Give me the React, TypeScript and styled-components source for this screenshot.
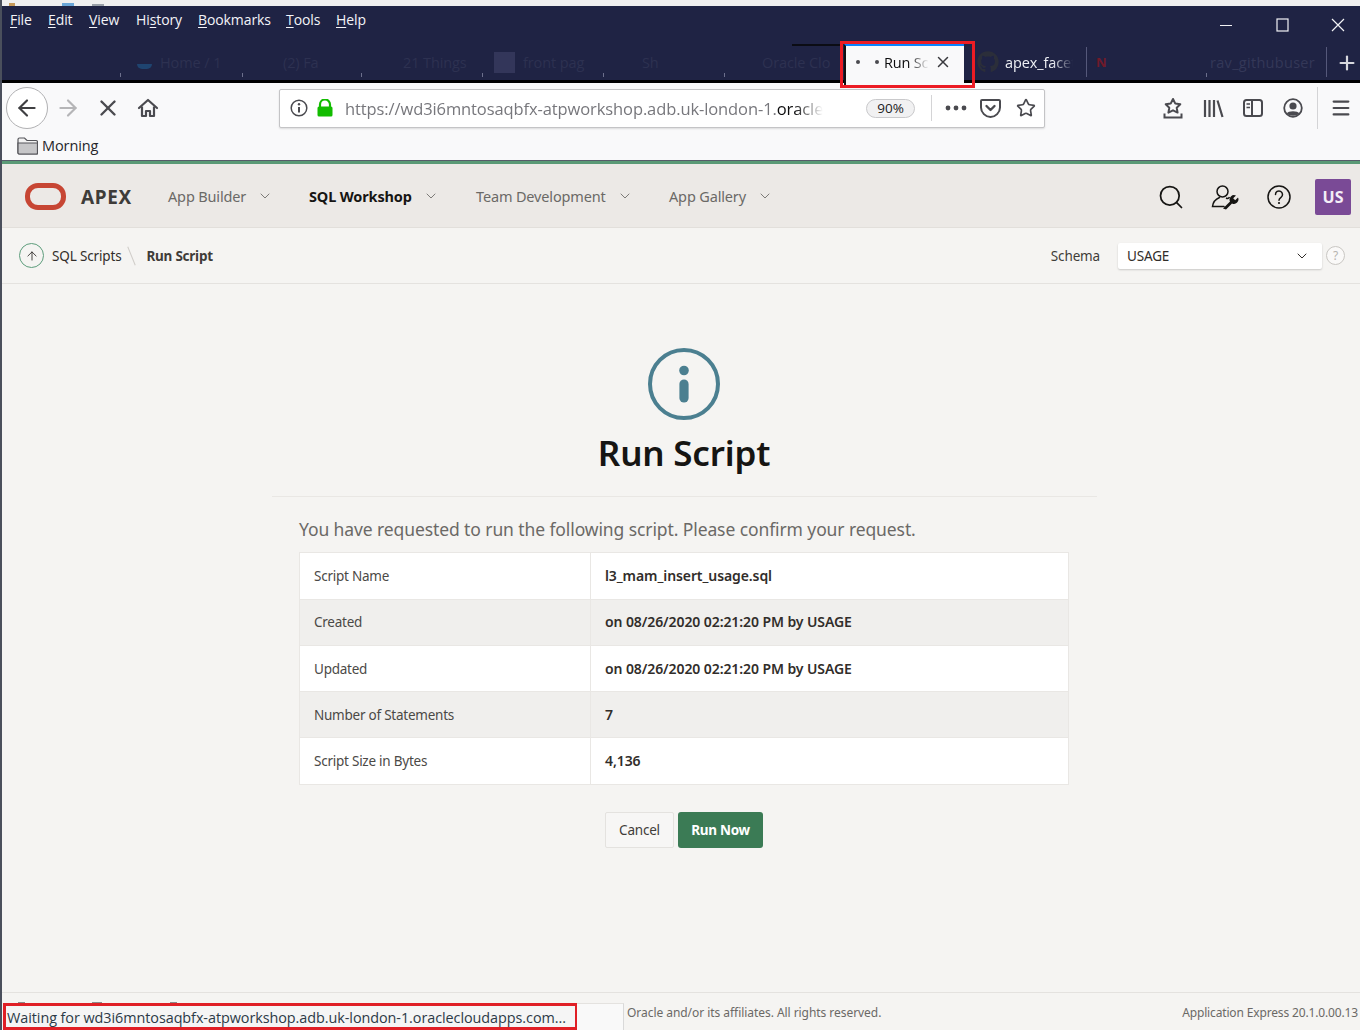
import React from "react";
import styled, { createGlobalStyle } from "styled-components";
import { FaGithub } from "react-icons/fa";
import { ArrowLeft, ArrowRight, ChevronDown, Search, X, Plus, ArrowUp, Star, Menu } from "lucide-react";

const GlobalStyle = createGlobalStyle`
	html, body {
		margin: 0;
		padding: 0;
		background: #f5f4f2;
		font-family: "Noto Sans", "Open Sans", sans-serif;
	}
	* {
		box-sizing: border-box;
	}
`;

const Page = styled.div`
	width: 1360px;
	height: 1030px;
	display: flex;
	flex-direction: column;
	overflow: hidden;
	border-left: 2px solid #4a4f5c;
`;

const TopSliver = styled.div`
	height: 6px;
	background:
		linear-gradient(#c79a5a, #c79a5a) 7px 3px / 6px 3px no-repeat,
		linear-gradient(#6aa6d8, #6aa6d8) 60px 3px / 12px 3px no-repeat,
		linear-gradient(#9aa0a8, #9aa0a8) 90px 4px / 12px 2px no-repeat,
		#efefef;
	flex-shrink: 0;
`;

const TitleBar = styled.div`
	height: 77px;
	background: #1f2344;
	display: flex;
	flex-direction: column;
	flex-shrink: 0;
`;

const MenuRow = styled.div`
	height: 36px;
	display: flex;
	align-items: center;
	padding: 0 0 0 8px;
`;

const MenuItem = styled.span<{ $width: number }>`
	width: ${(p) => p.$width}px;
	color: #f4f4f8;
	font-family: "Open Sans", sans-serif;
	font-size: 14px;
	letter-spacing: -0.1px;
	margin-top: -9px;

	u {
		text-underline-offset: 2px;
	}
`;

const WindowControls = styled.div`
	margin-left: auto;
	margin-right: -6px;
	display: flex;
	align-items: center;
	color: #f2f2f5;
`;

const WindowButton = styled.span`
	width: 56px;
	display: flex;
	justify-content: center;
	margin-top: 1px;
`;

const TabStrip = styled.div`
	flex: 1;
	display: flex;
	border-bottom: 3px solid #000;
	padding-top: 3px;
	background: linear-gradient(#0b0c14, #0b0c14) 790px 2px / 50px 2px no-repeat;
`;

const Tab = styled.div<{ $width: number; $indent?: number; $fullRule?: boolean }>`
	width: ${(p) => p.$width}px;
	margin: 2px 0 3px;
	padding-left: ${(p) => p.$indent ?? 0}px;
	display: flex;
	align-items: center;
	border-right: ${(p) => (p.$fullRule ? "1px solid #55587a" : "none")};
	background: ${(p) =>
		p.$fullRule ? "none" : "linear-gradient(#6c6f8c, #6c6f8c) right bottom / 1px 4px no-repeat"};
	color: #2d3151;
	font-family: "Open Sans", sans-serif;
	font-size: 14.5px;
	letter-spacing: -0.1px;
	white-space: nowrap;
	overflow: hidden;
`;

const LightTabLabel = styled.span`
	color: #eef0f5;
	margin-left: 6px;
	width: 68px;
	overflow: hidden;
	-webkit-mask-image: linear-gradient(90deg, #000 70%, transparent);
	mask-image: linear-gradient(90deg, #000 70%, transparent);
`;

const UserTabLabel = styled.span`
	letter-spacing: 0.3px;
	color: #343858;
`;

const TabFavicon = styled.span`
	width: 21px;
	height: 21px;
	background: #33365a;
	margin-right: 8px;
	flex-shrink: 0;
`;

const HintFavicon = styled.span`
	width: 15px;
	height: 5px;
	margin: 8px 8px 0 0;
	background: #1f4470;
	border-radius: 0 0 8px 8px;
	flex-shrink: 0;
`;

const RedLetter = styled.span`
	color: #701a2a;
	font-size: 13px;
	font-weight: 700;
`;

const ActiveTabFrame = styled.div`
	position: relative;
	width: 135px;
	margin: -4px 0 -5px -2px;
	display: flex;
	z-index: 2;
	padding: 3px 11px 0 4px;

	&::after {
		content: "";
		position: absolute;
		inset: 0 0 -3px 0;
		border: 3px solid #ec1c24;
		pointer-events: none;
	}
`;

const ActiveTab = styled.div`
	flex: 1;
	background: #f9f9fa;
	border-top: 2px solid #0a84ff;
	border-left: 2px solid #111;
	display: flex;
	align-items: center;
	padding: 0 0 7px 10px;
	color: #0c0c0d;
	font-family: "Open Sans", sans-serif;
	font-size: 14.5px;
`;

const Dot = styled.span<{ $gap?: number }>`
	width: 4px;
	height: 4px;
	margin-left: ${(p) => p.$gap ?? 0}px;
	border-radius: 50%;
	background: #4a4a4f;
	flex-shrink: 0;
`;

const ActiveLabel = styled.span`
	margin: 0 5px 0 5px;
	width: 45px;
	overflow: hidden;
	white-space: nowrap;
	letter-spacing: -0.2px;
	-webkit-mask-image: linear-gradient(90deg, #000 55%, transparent);
	mask-image: linear-gradient(90deg, #000 55%, transparent);
`;

const NewTab = styled.div`
	flex: 1;
	display: flex;
	align-items: center;
	justify-content: center;
	color: #d7d8de;
	padding-left: 6px;
`;

const NavBar = styled.div`
	height: 77px;
	background: #f9f9fa;
	flex-shrink: 0;
	display: flex;
	flex-direction: column;
`;

const Toolbar = styled.div`
	height: 50px;
	display: flex;
	align-items: center;
	padding: 0 0 0 4px;
`;

const BackButton = styled.div`
	width: 42px;
	height: 42px;
	border-radius: 50%;
	border: 1px solid #b1b1b3;
	background: #fff;
	display: flex;
	align-items: center;
	justify-content: center;
	color: #3f3f42;
	flex-shrink: 0;
`;

const ToolButton = styled.div<{ $width?: number; $color?: string; $left?: number }>`
	width: ${(p) => p.$width ?? 40}px;
	margin-left: ${(p) => p.$left ?? 0}px;
	display: flex;
	align-items: center;
	justify-content: center;
	color: ${(p) => p.$color ?? "#4a4a4f"};
	flex-shrink: 0;
`;

const UrlBar = styled.div`
	width: 766px;
	height: 39px;
	margin-left: 111px;
	background: #fff;
	border: 1px solid #c4c4c6;
	border-radius: 2px;
	box-shadow: 0 1px 2px rgba(0, 0, 0, 0.12);
	display: flex;
	align-items: center;
	padding-left: 10px;
	gap: 9px;
	flex-shrink: 0;
`;

const UrlText = styled.span`
	width: 478px;
	margin-left: 3px;
	font-family: "Open Sans", sans-serif;
	font-size: 16.5px;
	color: #77777c;
	white-space: nowrap;
	overflow: hidden;
	letter-spacing: -0.1px;
	-webkit-mask-image: linear-gradient(90deg, #000 94%, transparent);
	mask-image: linear-gradient(90deg, #000 94%, transparent);

	b {
		font-weight: 400;
		color: #0c0c0d;
	}
`;

const ZoomPill = styled.span`
	width: 49px;
	height: 19px;
	margin-left: 34px;
	border: 1px solid #c9c9cb;
	border-radius: 10px;
	background: #f1f1f2;
	color: #222;
	font-family: "Open Sans", sans-serif;
	font-size: 13.5px;
	display: flex;
	align-items: center;
	justify-content: center;
	flex-shrink: 0;
`;

const UrlActions = styled.div`
	display: flex;
	align-items: center;
	margin-left: 7px;
`;

const VerticalRule = styled.span<{ $height: number; $left: number }>`
	width: 1px;
	height: ${(p) => p.$height}px;
	margin-left: ${(p) => p.$left}px;
	background: #d4d4d6;
	flex-shrink: 0;
`;

const ToolbarEnd = styled.div`
	display: flex;
	align-items: center;
	margin-left: 108px;
`;

const BookmarksRow = styled.div`
	height: 27px;
	display: flex;
	align-items: center;
	padding: 0 0 2px 15px;
	gap: 4px;
	color: #26262a;
	font-family: "Open Sans", sans-serif;
	font-size: 14.5px;
	letter-spacing: -0.1px;
`;

const GreenRule = styled.div`
	height: 4px;
	background: #5a9a76;
	border-top: 1px solid #565c6a;
	flex-shrink: 0;
`;

const ApexHeader = styled.header`
	height: 64px;
	background: #ece9e6;
	border-bottom: 1px solid #e2dfdb;
	display: flex;
	align-items: center;
	padding: 0 9px 0 23px;
	flex-shrink: 0;
`;

const OracleMark = styled.span`
	width: 41px;
	height: 27px;
	margin-top: 2px;
	border: 5px solid #c74634;
	border-radius: 13px;
	flex-shrink: 0;
`;

const ApexWord = styled.span`
	margin: 2px 0 0 15px;
	width: 87px;
	font-size: 19px;
	font-weight: 700;
	letter-spacing: 0.6px;
	color: #3e3c39;
`;

const NavItem = styled.span<{ $active?: boolean }>`
	font-size: 14.5px;
	font-weight: ${(p) => (p.$active ? 700 : 400)};
	color: ${(p) => (p.$active ? "#161513" : "#6b6966")};
	letter-spacing: -0.15px;
	white-space: nowrap;
`;

const NavGroup = styled.div<{ $width: number }>`
	width: ${(p) => p.$width}px;
	display: flex;
	align-items: center;
	gap: 11px;
	color: #7d7b78;
`;

const HeaderIcons = styled.div`
	margin: 2px 0 0 auto;
	display: flex;
	align-items: center;
	color: #161513;
`;

const HeaderIcon = styled.span`
	width: 54px;
	display: flex;
	justify-content: center;
`;

const Avatar = styled.span`
	width: 36px;
	height: 36px;
	margin-left: 9px;
	background: #7a4a96;
	border-radius: 2px;
	color: #f4eef7;
	font-size: 16px;
	font-weight: 700;
	display: flex;
	align-items: center;
	justify-content: center;
`;

const Breadcrumb = styled.div`
	height: 56px;
	background: #f5f4f2;
	border-bottom: 1px solid #e4e2df;
	display: flex;
	align-items: center;
	padding: 0 15px 0 17px;
	font-size: 13.5px;
	flex-shrink: 0;
	letter-spacing: -0.15px;
`;

const UpCircle = styled.span`
	width: 25px;
	height: 25px;
	border-radius: 50%;
	border: 1px solid #5d9d7c;
	color: #312d2a;
	display: flex;
	align-items: center;
	justify-content: center;
	flex-shrink: 0;
`;

const CrumbLink = styled.span`
	margin-left: 8px;
	color: #312d2a;
`;

const CrumbSlash = styled.span`
	width: 1px;
	height: 20px;
	margin: 0 14px 0 10px;
	background: #cfccc8;
	transform: rotate(-22deg);
`;

const CrumbCurrent = styled.span`
	font-weight: 700;
	color: #3f3c39;
	letter-spacing: -0.25px;
`;

const SchemaLabel = styled.span`
	margin-left: auto;
	color: #3f3c39;
`;

const SchemaSelect = styled.div`
	width: 204px;
	height: 26px;
	margin-left: 18px;
	padding: 0 12px 0 9px;
	background: #fff;
	border-radius: 2px;
	box-shadow: 0 1px 2px rgba(0, 0, 0, 0.18);
	display: flex;
	align-items: center;
	justify-content: space-between;
	color: #312d2a;
`;

const SmallHelp = styled.span`
	width: 19px;
	height: 19px;
	margin-left: 4px;
	border: 1px solid #c9c7c3;
	border-radius: 50%;
	background: #faf9f8;
	color: #b6b3af;
	font-size: 12px;
	display: flex;
	align-items: center;
	justify-content: center;
`;

const Main = styled.main`
	flex: 1;
	display: flex;
	flex-direction: column;
	align-items: center;
	padding: 64px 0 0 6px;
	background: #f5f4f2;
`;

const Title = styled.h1`
	margin: 9px 0 0;
	font-size: 35px;
	line-height: 48px;
	font-weight: 600;
	color: #161513;
	letter-spacing: -0.2px;
`;

const Divider = styled.div`
	width: 825px;
	height: 1px;
	margin-top: 19px;
	background: #e9e7e4;
`;

const Content = styled.div`
	width: 770px;
`;

const Lead = styled.p`
	margin: 20px 0 10.7px;
	font-size: 17.5px;
	line-height: 24px;
	color: #6b6966;
	letter-spacing: -0.1px;
`;

const SummaryTable = styled.div`
	border: 1px solid #e9e7e4;
	background: #fff;
`;

const SummaryRow = styled.div<{ $shaded: boolean }>`
	height: 46.2px;
	display: grid;
	grid-template-columns: 291px 1fr;
	background: ${(p) => (p.$shaded ? "#f0efed" : "#fff")};

	& + & {
		border-top: 1px solid #e9e7e4;
	}
`;

const RowLabel = styled.div`
	display: flex;
	align-items: center;
	padding-left: 14px;
	border-right: 1px solid #e9e7e4;
	color: #4b4946;
	font-size: 13.5px;
	letter-spacing: -0.24px;
`;

const RowValue = styled.div`
	display: flex;
	align-items: center;
	padding: 0 0 1px 14px;
	font-size: 14px;
	font-weight: 600;
	letter-spacing: -0.09px;
	color: #312d2a;
`;

const Actions = styled.div`
	margin-top: 27.3px;
	display: flex;
	justify-content: center;
	gap: 4px;
`;

const CancelButton = styled.button`
	width: 69px;
	height: 36px;
	border: 1px solid #e4e2df;
	border-radius: 2px;
	background: #f7f6f5;
	color: #3f3c39;
	font-family: inherit;
	font-size: 13.5px;
	letter-spacing: -0.2px;
	padding: 0;
`;

const RunButton = styled.button`
	width: 85px;
	height: 36px;
	border: none;
	border-radius: 3px;
	background: #3b7b55;
	color: #fff;
	font-family: inherit;
	font-size: 13.5px;
	font-weight: 700;
	letter-spacing: -0.3px;
	padding: 0;
`;

const Footer = styled.footer`
	height: 38px;
	border-top: 1px solid #e4e2df;
	display: flex;
	align-items: flex-end;
	flex-shrink: 0;
	background:
		linear-gradient(#8a8a8a, #8a8a8a) 16px 9px / 7px 1px no-repeat,
		linear-gradient(#8a8a8a, #8a8a8a) 90px 9px / 10px 1px no-repeat,
		linear-gradient(#8a8a8a, #8a8a8a) 168px 9px / 7px 1px no-repeat,
		#f5f4f2;
`;

const StatusPanel = styled.div`
	width: 574px;
	height: 27px;
	margin-left: 1px;
	border: 3px solid #e01f26;
	border-right-width: 2px;
	background: #f5f5f5;
	display: flex;
	align-items: center;
	padding: 2px 0 0 1px;
	color: #2c3a47;
	font-family: "Open Sans", sans-serif;
	font-size: 14.4px;
	letter-spacing: -0.06px;
	white-space: nowrap;
`;

const StatusTail = styled.div`
	width: 47px;
	height: 27px;
	background: #f9f9f9;
	border-right: 1px solid #d9d9d9;
	border-top: 1px solid #e4e2df;
`;

const Copyright = styled.span`
	height: 27px;
	margin-left: 3px;
	padding-bottom: 9px;
	display: flex;
	align-items: center;
	font-size: 12px;
	color: #6b6966;
	letter-spacing: -0.05px;
`;

const Version = styled(Copyright)`
	margin-left: auto;
	margin-right: 2px;
	letter-spacing: -0.15px;
`;

const MinimizeGlyph = () => (
	<svg width="14" height="14" viewBox="0 0 14 14" stroke="currentColor" strokeWidth="1">
		<path d="M1 7.500h12" />
	</svg>
);

const MaximizeGlyph = () => (
	<svg width="13" height="14" viewBox="0 0 13 14" fill="none" stroke="currentColor" strokeWidth="1.200">
		<rect x="1" y="1" width="11" height="12" />
	</svg>
);

const CloseGlyph = () => (
	<svg width="14" height="14" viewBox="0 0 14 14" stroke="currentColor" strokeWidth="1.200">
		<path d="m1 1 12 12M13 1 1 13" />
	</svg>
);

const BrowserHome = () => (
	<svg width="22" height="22" viewBox="0 0 22 22" fill="none" stroke="currentColor" strokeWidth="2.2">
		<path d="M2 11 11 3l9 8" strokeLinecap="round" strokeLinejoin="round" />
		<path d="M5 9.500V19h4v-5h4v5h4V9.500" strokeLinejoin="round" />
	</svg>
);

const BrowserInfo = () => (
	<svg width="18" height="18" viewBox="0 0 18 18" fill="none" stroke="#4a4a4f" strokeWidth="1.5">
		<circle cx="9" cy="9" r="7.8" />
		<path d="M9 8v5.500" strokeWidth="2" />
		<circle cx="9" cy="5.200" r="1.200" fill="#4a4a4f" stroke="none" />
	</svg>
);

const GreenLock = () => (
	<svg width="16" height="18" viewBox="0 0 16 18">
		<path d="M3 8V5.500a5 5 0 0 1 10 0V8" fill="none" stroke="#12bc00" strokeWidth="2.2" />
		<rect x="0.5" y="7.5" width="15" height="10" rx="1.5" fill="#12bc00" />
	</svg>
);

const MoreDots = () => (
	<svg width="22" height="6" viewBox="0 0 22 6" fill="#4a4a4f">
		<circle cx="3" cy="3" r="2.4" />
		<circle cx="11" cy="3" r="2.4" />
		<circle cx="19" cy="3" r="2.4" />
	</svg>
);

const PocketIcon = () => (
	<svg width="21" height="20" viewBox="0 0 21 20" fill="none" stroke="#4a4a4f">
		<path d="M2 2h17a1 1 0 0 1 1 1v6.500C20 14.500 15.500 19 10.500 19S1 14.500 1 9.500V3a1 1 0 0 1 1-1Z" strokeWidth="2" />
		<path d="m6.500 8 4 4 4-4" strokeWidth="2.4" strokeLinecap="round" strokeLinejoin="round" />
	</svg>
);

const StarInbox = () => (
	<svg width="20" height="22" viewBox="0 0 20 22" fill="none" stroke="#4a4a4f" strokeWidth="2">
		<path d="m10 2 2.300 4.600 5 .7-3.600 3.400.9 4.900L10 13.300l-4.600 2.300.9-4.900L2.700 7.300l5-.7Z" strokeLinejoin="round" />
		<path d="M1.500 16.500V20.500h17v-4" />
	</svg>
);

const LibraryIcon = () => (
	<svg width="21" height="19" viewBox="0 0 21 19" fill="none" stroke="#4a4a4f" strokeWidth="2.200">
		<path d="M2 1v17M6.500 1v17M11 1v17M14.500 1.500 19.500 18" />
	</svg>
);

const SidebarIcon = () => (
	<svg width="20" height="18" viewBox="0 0 20 18" fill="none" stroke="#4a4a4f" strokeWidth="2">
		<rect x="1" y="1" width="18" height="16" rx="2.500" />
		<path d="M9 1v16" />
		<path d="M3.500 5H7M3.500 8.500H7" strokeWidth="1.500" />
	</svg>
);

const AccountIcon = () => (
	<svg width="20" height="20" viewBox="0 0 20 20">
		<circle cx="10" cy="10" r="8.800" fill="none" stroke="#4a4a4f" strokeWidth="1.800" />
		<circle cx="10" cy="8" r="3.600" fill="#4a4a4f" />
		<path d="M3.800 15.500C5 12.500 15 12.500 16.200 15.500 13 18.500 7 18.500 3.800 15.500Z" fill="#4a4a4f" />
	</svg>
);

const FolderIcon = () => (
	<svg width="21" height="18" viewBox="0 0 21 18" stroke="#55555a" strokeWidth="1.200">
		<path d="M1 16V2.500A1.500 1.500 0 0 1 2.500 1h5L10 3.500h9A1.500 1.500 0 0 1 20.500 5v11a1 1 0 0 1-1 1h-17A1.500 1.500 0 0 1 1 16Z" fill="#f2f2f2" />
		<path d="M1 6h19.500v10a1 1 0 0 1-1 1h-17A1.500 1.500 0 0 1 1 16Z" fill="#c6c6c8" />
	</svg>
);

const UserWrench = () => (
	<svg width="28" height="26" viewBox="0 0 28 26" fill="none" stroke="#161513" strokeWidth="1.500">
		<circle cx="11.500" cy="7.500" r="5.500" />
		<path d="M8.500 13.500C5 15 2 18 1.500 22.500H13" strokeLinecap="round" />
		<path d="M15 14c2 1 3 0 3.500-1" />
		<path
			d="M12 24.500 19 17.500a4.500 4.500 0 0 1 6-6l-2.800 2.800 2 2L27 13.500a4.500 4.500 0 0 1-6 6l-6 6Z"
			fill="#161513"
			stroke="none"
		/>
	</svg>
);

const HelpGlyph = () => (
	<svg width="24" height="24" viewBox="0 0 24 24" fill="none" stroke="#161513" strokeWidth="1.500">
		<circle cx="12" cy="12" r="11" />
		<path d="M8.500 9.500a3.500 3.500 0 1 1 5.500 2.800c-1.300.9-2 1.500-2 3" strokeLinecap="round" />
		<circle cx="12" cy="18" r="1.100" fill="#161513" stroke="none" />
	</svg>
);

const InfoBadge = () => (
	<svg width="72" height="72" viewBox="0 0 72 72">
		<circle cx="36" cy="36" r="34" fill="none" stroke="#4b7f90" strokeWidth="4" />
		<circle cx="36" cy="22.500" r="4.800" fill="#4b7f90" />
		<rect x="31.400" y="31.500" width="9.200" height="23" rx="4.600" fill="#4b7f90" />
	</svg>
);

const rows = [
	{ label: "Script Name", value: "l3_mam_insert_usage.sql" },
	{ label: "Created", value: "on 08/26/2020 02:21:20 PM by USAGE" },
	{ label: "Updated", value: "on 08/26/2020 02:21:20 PM by USAGE" },
	{ label: "Number of Statements", value: "7" },
	{ label: "Script Size in Bytes", value: "4,136" },
];

const navItems = [
	{ label: "App Builder", width: 141 },
	{ label: "SQL Workshop", width: 167, active: true },
	{ label: "Team Development", width: 193 },
	{ label: "App Gallery", width: 120 },
];

const App: React.FC = () => {
	return (
		<Page>
			<GlobalStyle />
			<TopSliver />
			<TitleBar>
				<MenuRow>
					<MenuItem $width={38}><u>F</u>ile</MenuItem>
					<MenuItem $width={41}><u>E</u>dit</MenuItem>
					<MenuItem $width={47}><u>V</u>iew</MenuItem>
					<MenuItem $width={62}>Hi<u>s</u>tory</MenuItem>
					<MenuItem $width={88}><u>B</u>ookmarks</MenuItem>
					<MenuItem $width={50}><u>T</u>ools</MenuItem>
					<MenuItem $width={40}><u>H</u>elp</MenuItem>
					<WindowControls>
						<WindowButton><MinimizeGlyph /></WindowButton>
						<WindowButton><MaximizeGlyph /></WindowButton>
						<WindowButton><CloseGlyph /></WindowButton>
					</WindowControls>
				</MenuRow>
				<TabStrip>
					<Tab $width={119} />
					<Tab $width={122} $indent={16}><HintFavicon />Home / 1</Tab>
					<Tab $width={119} $indent={40}>(2) Fa</Tab>
					<Tab $width={121} $indent={41}>21 Things</Tab>
					<Tab $width={121} $indent={11}><TabFavicon />front pag</Tab>
					<Tab $width={121} $indent={38}>Sh</Tab>
					<Tab $width={117} $indent={37}>Oracle Clo</Tab>
					<ActiveTabFrame>
						<ActiveTab>
							<Dot />
							<Dot $gap={15} />
							<ActiveLabel>Run Script</ActiveLabel>
							<X size={18} strokeWidth={2} color="#3a3a3e" />
						</ActiveTab>
					</ActiveTabFrame>
					<Tab $width={112} $indent={2} $fullRule>
						<FaGithub size={22} color="#2b2e3a" />
						<LightTabLabel>apex_facet</LightTabLabel>
					</Tab>
					<Tab $width={120} $indent={9}><RedLetter>N</RedLetter></Tab>
					<Tab $width={120} $indent={3} $fullRule><UserTabLabel>rav_githubuser</UserTabLabel></Tab>
					<NewTab><Plus size={22} strokeWidth={2.4} /></NewTab>
				</TabStrip>
			</TitleBar>
			<NavBar>
				<Toolbar>
					<BackButton><ArrowLeft size={26} strokeWidth={2} /></BackButton>
					<ToolButton $color="#b5b5b7"><ArrowRight size={26} strokeWidth={2} /></ToolButton>
					<ToolButton><X size={26} strokeWidth={2.2} /></ToolButton>
					<ToolButton><BrowserHome /></ToolButton>
					<UrlBar>
						<BrowserInfo />
						<GreenLock />
						<UrlText>https://wd3i6mntosaqbfx-atpworkshop.adb.uk-london-1.<b>oracle</b></UrlText>
						<ZoomPill>90%</ZoomPill>
						<UrlActions>
							<VerticalRule $height={26} $left={0} />
							<ToolButton $width={48}><MoreDots /></ToolButton>
							<ToolButton $width={21}><PocketIcon /></ToolButton>
							<ToolButton $width={23} $left={13}><Star size={20} strokeWidth={2} /></ToolButton>
						</UrlActions>
					</UrlBar>
					<ToolbarEnd>
						<ToolButton><StarInbox /></ToolButton>
						<ToolButton><LibraryIcon /></ToolButton>
						<ToolButton><SidebarIcon /></ToolButton>
						<ToolButton><AccountIcon /></ToolButton>
						<VerticalRule $height={42} $left={4} />
						<ToolButton $width={46}><Menu size={22} strokeWidth={2.4} /></ToolButton>
					</ToolbarEnd>
				</Toolbar>
				<BookmarksRow>
					<FolderIcon />
					<span>Morning</span>
				</BookmarksRow>
			</NavBar>
			<GreenRule />
			<ApexHeader>
				<OracleMark />
				<ApexWord>APEX</ApexWord>
				{navItems.map((item) => (
					<NavGroup key={item.label} $width={item.width}>
						<NavItem $active={item.active}>{item.label}</NavItem>
						<ChevronDown size={16} strokeWidth={1.5} />
					</NavGroup>
				))}
				<HeaderIcons>
					<HeaderIcon><Search size={28} strokeWidth={1.5} /></HeaderIcon>
					<HeaderIcon><UserWrench /></HeaderIcon>
					<HeaderIcon><HelpGlyph /></HeaderIcon>
					<Avatar>US</Avatar>
				</HeaderIcons>
			</ApexHeader>
			<Breadcrumb>
				<UpCircle><ArrowUp size={14} strokeWidth={1.5} /></UpCircle>
				<CrumbLink>SQL Scripts</CrumbLink>
				<CrumbSlash />
				<CrumbCurrent>Run Script</CrumbCurrent>
				<SchemaLabel>Schema</SchemaLabel>
				<SchemaSelect>
					USAGE
					<ChevronDown size={16} strokeWidth={1.5} />
				</SchemaSelect>
				<SmallHelp>?</SmallHelp>
			</Breadcrumb>
			<Main>
				<InfoBadge />
				<Title>Run Script</Title>
				<Divider />
				<Content>
					<Lead>You have requested to run the following script. Please confirm your request.</Lead>
					<SummaryTable>
						{rows.map((row, index) => (
							<SummaryRow key={row.label} $shaded={index % 2 === 1}>
								<RowLabel>{row.label}</RowLabel>
								<RowValue>{row.value}</RowValue>
							</SummaryRow>
						))}
					</SummaryTable>
					<Actions>
						<CancelButton>Cancel</CancelButton>
						<RunButton>Run Now</RunButton>
					</Actions>
				</Content>
			</Main>
			<Footer>
				<StatusPanel>Waiting for wd3i6mntosaqbfx-atpworkshop.adb.uk-london-1.oraclecloudapps.com...</StatusPanel>
				<StatusTail />
				<Copyright>Oracle and/or its affiliates. All rights reserved.</Copyright>
				<Version>Application Express 20.1.0.00.13</Version>
			</Footer>
		</Page>
	);
};

export default App;
